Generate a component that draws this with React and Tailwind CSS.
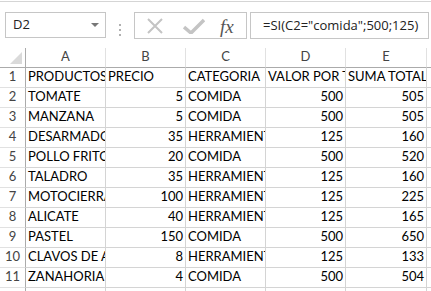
import React from 'react';

const rows = [
    ['PRODUCTOS', 'PRECIO', 'CATEGORIA', 'VALOR POR TOTAL', 'SUMA TOTAL'],
    ['TOMATE', 5, 'COMIDA', 500, 505],
    ['MANZANA', 5, 'COMIDA', 500, 505],
    ['DESARMADOR', 35, 'HERRAMIENTA', 125, 160],
    ['POLLO FRITO', 20, 'COMIDA', 500, 520],
    ['TALADRO', 35, 'HERRAMIENTA', 125, 160],
    ['MOTOCIERRA', 100, 'HERRAMIENTA', 125, 225],
    ['ALICATE', 40, 'HERRAMIENTA', 125, 165],
    ['PASTEL', 150, 'COMIDA', 500, 650],
    ['CLAVOS DE ACERO', 8, 'HERRAMIENTA', 125, 133],
    ['ZANAHORIA', 4, 'COMIDA', 500, 504],
];

const cols = ['A', 'B', 'C', 'D', 'E', 'F'];

const App = () => {
    return (
        <div className="w-[431px] h-[291px] bg-white overflow-hidden font-['Lato',sans-serif] text-[13px] text-black">
            {/* Formula bar */}
            <div className="h-[47px] border-t border-[#d5d5d5] mt-[1px] flex pt-[10px] pl-[5px]">
                <div className="w-[101px] h-[26px] border border-[#c6c6c6] flex items-center justify-between pl-[7px] pr-[6px] font-['Open_Sans',sans-serif] text-[13px] text-[#222]">
                    <span>D2</span>
                    <svg width="8" height="5" viewBox="0 0 8 5">
                        <path d="M0 0 L8 0 L4 4 Z" fill="#777" />
                    </svg>
                </div>
                <div className="w-[28px] flex flex-col items-center justify-center gap-[3px]">
                    <span className="w-[2px] h-[2px] bg-[#b0b0b0]" />
                    <span className="w-[2px] h-[2px] bg-[#b0b0b0]" />
                    <span className="w-[2px] h-[2px] bg-[#b0b0b0]" />
                </div>
                <div className="w-[113px] h-[27px] border border-[#c6c6c6] flex items-center">
                    <svg width="16" height="16" viewBox="0 0 16 16" className="ml-[12px]">
                        <path d="M1 1 L15 15 M15 1 L1 15" stroke="#c4c4c4" strokeWidth="2" />
                    </svg>
                    <svg width="22" height="16" viewBox="0 0 22 16" className="ml-[20px]">
                        <path d="M1 9 L8 15 L21 2" stroke="#c4c4c4" strokeWidth="3.5" fill="none" />
                    </svg>
                    <span className="ml-[15px] font-['Liberation_Serif',serif] italic text-[19px] leading-none text-[#555] mt-[2px]">
                        fx
                    </span>
                </div>
                <div className="ml-[3px] w-[179px] h-[27px] border border-[#c6c6c6] flex items-center pl-[12px] font-['Open_Sans',sans-serif] text-[13px] text-[#222] whitespace-nowrap overflow-hidden">
                    =SI(C2="comida";500;125)
                </div>
            </div>

            {/* Sheet */}
            <div className="grid grid-cols-[26px_80px_80px_80px_80px_81px_80px] w-max">
                <div className="h-[20px] border-r border-b border-[#ababab] relative">
                    <svg width="12" height="12" viewBox="0 0 12 12" className="absolute right-[3px] bottom-[3px]">
                        <path d="M12 0 L12 12 L0 12 Z" fill="#dadada" />
                    </svg>
                </div>
                {cols.map((c) => (
                    <div
                        key={c}
                        className="h-[20px] border-r border-b border-r-[#e1e1e1] border-b-[#ababab] flex items-end justify-center pb-[1px] text-[#444]"
                    >
                        {c}
                    </div>
                ))}

                {rows.map((r, i) => (
                    <React.Fragment key={i}>
                        <div className="h-[20px] border-r border-b border-r-[#ababab] border-b-[#e1e1e1] flex items-end justify-center pb-[1px] text-[#444]">
                            {i + 1}
                        </div>
                        {r.map((v, j) => (
                            <div
                                key={j}
                                className={`h-[20px] border-r border-b border-[#d4d4d4] flex items-end pb-[1px] overflow-hidden whitespace-nowrap ${
                                    typeof v === 'number' ? 'justify-end pr-[2px]' : 'pl-[2px]'
                                }`}
                            >
                                {v}
                            </div>
                        ))}
                        <div className="h-[20px] border-r border-b border-[#d4d4d4]" />
                    </React.Fragment>
                ))}
                <div className="h-[20px] border-r border-[#ababab]" />
                {cols.map((c) => (
                    <div key={c} className="h-[20px] border-r border-[#d4d4d4]" />
                ))}
            </div>
        </div>
    );
};

export default App;
